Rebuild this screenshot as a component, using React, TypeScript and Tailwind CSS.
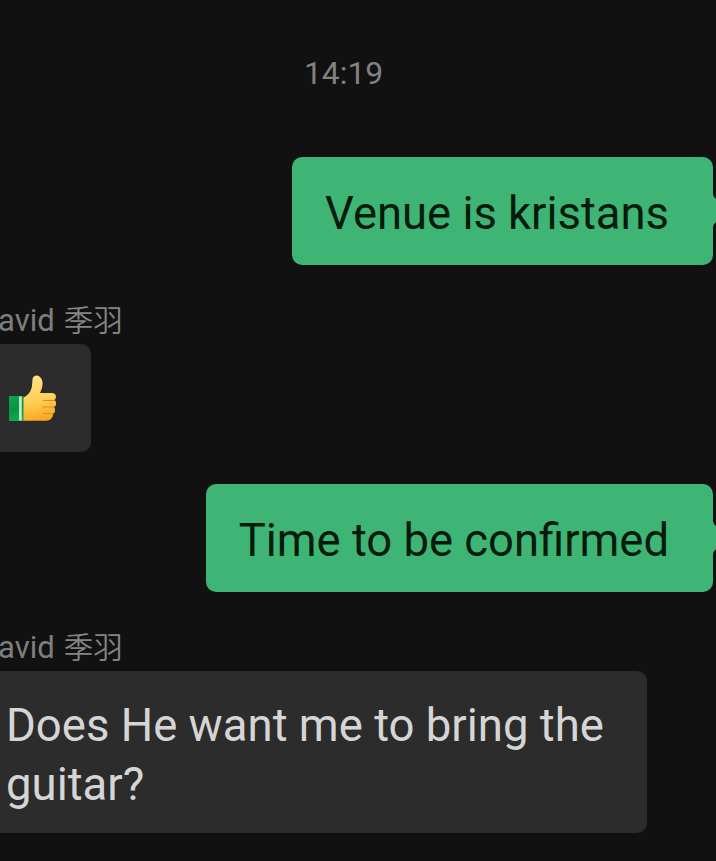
import type { ReactNode } from 'react';

function SentMessage({ children }: { children: ReactNode }) {
    return (
        <div className="relative h-[108px] rounded-[10px] bg-[#3eb575] pl-[33px] pr-[44px] text-[45.4px] leading-[113px] text-[#031b0c] whitespace-nowrap">
            {children}
            <svg className="absolute left-full top-[37px] h-[34px] w-[3px]" viewBox="0 0 3 34" fill="#3eb575">
                <path d="M-1 0H0Q0.3 3 3 5V28Q0.3 30 0 34H-1Z" />
            </svg>
        </div>
    );
}

function SenderName() {
    return (
        <div className="-ml-[2px] flex h-10 items-baseline gap-[9px] text-[31px] leading-[36px] text-[#7e7e7e] whitespace-nowrap">
            <span>avid</span>
            <span className="font-['Noto_Sans_CJK_SC',sans-serif] text-[29.5px] font-[350] text-[#848484]">季羽</span>
        </div>
    );
}

function ThumbsUp() {
    return (
        <svg className="h-[48px] w-[50px]" viewBox="0 0 50 48" fill="none">
            <defs>
                <linearGradient id="hand" x1="25" y1="0" x2="34" y2="46" gradientUnits="userSpaceOnUse">
                    <stop stopColor="#ffe08a" />
                    <stop offset="0.55" stopColor="#ffcf58" />
                    <stop offset="1" stopColor="#f9a51f" />
                </linearGradient>
                <linearGradient id="cuff" x1="1" y1="21" x2="12" y2="46" gradientUnits="userSpaceOnUse">
                    <stop stopColor="#15a64b" />
                    <stop offset="0.5" stopColor="#079543" />
                    <stop offset="1" stopColor="#14ac50" />
                </linearGradient>
            </defs>
            <path d="M15 23C20 20 23 17 24 11L24.5 4C25 0.5 29 -0.5 31.5 1.5C36 5 35 12 32 18H43.5C48.5 18 49 22.5 46.5 25C49 27 48.5 31 46 32C48 35 47 38 45 39C45 43 42 45.7 38 45.7H15Z" fill="url(#hand)" />
            <path d="M35 25.5H46.5M35 32H46M35 38.5H45" stroke="#d98d22" strokeWidth="1" strokeLinecap="round" />
            <path d="M1 21H15.5V46H1Z" fill="url(#cuff)" />
            <path d="M11 21.5H13.8V45.5H11Z" fill="#c3e7ce" />
        </svg>
    );
}

export default function App() {
    return (
        <main className="h-[861px] w-[716px] overflow-hidden bg-[#111111] font-['Roboto','Noto_Sans_CJK_SC',sans-serif]">
            <div className="h-[157px] pl-[304px] pt-[53px] text-[31.8px] leading-[40px] text-[#828282]">14:19</div>
            <div className="flex justify-end pr-[3px]">
                <SentMessage>Venue is kristans</SentMessage>
            </div>
            <div className="pt-[35px]">
                <SenderName />
            </div>
            <div className="mt-1 h-[108px] w-[91px] rounded-r-[10px] bg-[#2c2c2c] pl-2 pt-[31px]">
                <ThumbsUp />
            </div>
            <div className="mt-8 flex justify-end pr-[3px]">
                <SentMessage>Time to be confirmed</SentMessage>
            </div>
            <div className="pt-[35px]">
                <SenderName />
            </div>
            <div className="mt-1 h-[162px] w-[647px] rounded-r-[10px] bg-[#2c2c2c] pl-[6px] pt-[25px] text-[45.5px] leading-[59px] text-[#d5d5d5] whitespace-nowrap">
                Does He want me to bring the
                <br />
                guitar?
            </div>
        </main>
    );
}
